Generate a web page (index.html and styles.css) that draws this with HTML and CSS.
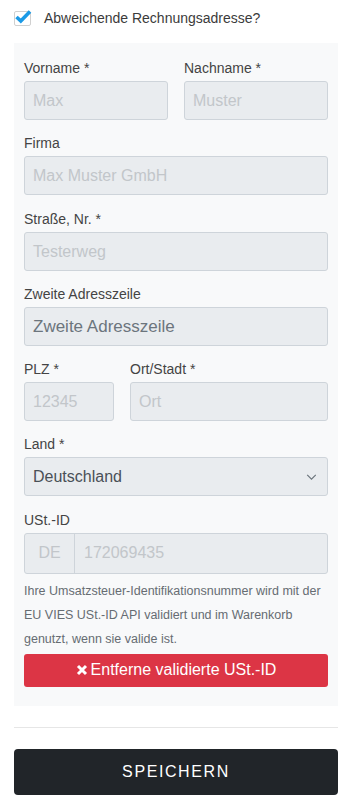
FILE: index.html
```html
<!DOCTYPE html>
<html lang="de">
<head>
<meta charset="utf-8">
<title>Rechnungsadresse</title>
<link rel="stylesheet" href="styles.css">
</head>
<body>
<div class="page">
  <label class="check">
    <span class="check-box">
      <svg viewBox="0 0 18 16" width="18" height="16"><path d="M2.5 8 L6.8 12 L16 2.5" fill="none" stroke="#1b9ae6" stroke-width="3.6" stroke-linecap="butt"/></svg>
    </span>
    <span class="check-text">Abweichende Rechnungsadresse?</span>
  </label>

  <div class="panel">
    <div class="row two">
      <div class="group">
        <label class="lbl">Vorname *</label>
        <div class="field ph">Max</div>
      </div>
      <div class="group">
        <label class="lbl">Nachname *</label>
        <div class="field ph">Muster</div>
      </div>
    </div>
    <div class="group">
      <label class="lbl">Firma</label>
      <div class="field ph">Max Muster GmbH</div>
    </div>
    <div class="group">
      <label class="lbl">Straße, Nr. *</label>
      <div class="field ph">Testerweg</div>
    </div>
    <div class="group">
      <label class="lbl">Zweite Adresszeile</label>
      <div class="field dark">Zweite Adresszeile</div>
    </div>
    <div class="row plz">
      <div class="group">
        <label class="lbl">PLZ *</label>
        <div class="field ph">12345</div>
      </div>
      <div class="group">
        <label class="lbl">Ort/Stadt *</label>
        <div class="field ph">Ort</div>
      </div>
    </div>
    <div class="group">
      <label class="lbl">Land *</label>
      <div class="field select">
        <span class="val">Deutschland</span>
        <svg class="chev" viewBox="0 0 12 7" width="11" height="6"><path d="M1 1 L6 6 L11 1" fill="none" stroke="#6c757d" stroke-width="1.4"/></svg>
      </div>
    </div>
    <div class="group ust">
      <label class="lbl">USt.-ID</label>
      <div class="igroup">
        <span class="prepend">DE</span>
        <span class="ifield">172069435</span>
      </div>
      <p class="help">Ihre Umsatzsteuer-Identifikationsnummer wird mit der EU VIES USt.-ID API validiert und im Warenkorb genutzt, wenn sie valide ist.</p>
      <button class="btn-danger" type="button"><svg class="x" viewBox="0 0 12 12" width="12" height="12"><path d="M2 2 L10 10 M10 2 L2 10" stroke="#fff" stroke-width="3" stroke-linecap="butt"/></svg> Entferne validierte USt.-ID</button>
    </div>
  </div>

  <hr class="sep">

  <button class="btn-save" type="button">SPEICHERN</button>
</div>
</body>
</html>
```
FILE: styles.css
```css
* { box-sizing: border-box; }
html, body { margin: 0; padding: 0; background: #fff; }
body {
  font-family: "Liberation Sans", Arial, sans-serif;
  color: #333;
}
.page {
  padding: 8px 13px 0 14px;
}
.check {
  display: flex;
  align-items: center;
  height: 20px;
  margin-bottom: 15px;
}
.check-box {
  position: relative;
  width: 17px;
  height: 15px;
  border: 1px solid #d0d0d0;
  border-radius: 2px;
  background: #fff;
  margin-right: 13px;
}
.check-box svg { position: absolute; left: -1px; top: -3px; display: block; }
.check-text {
  font-size: 14px;
  color: #3b3b3b;
}
.panel {
  background: #f8f9fa;
  padding: 15px 10px 19px;
}
.row { display: grid; gap: 16px; }
.row.two { grid-template-columns: 1fr 1fr; }
.row.plz { grid-template-columns: 90px 1fr; }
.group { margin-bottom: 13.3px; }
.group.ust { margin-bottom: 0; }
.lbl {
  display: block;
  font-size: 14px;
  line-height: 21px;
  margin-bottom: 2px;
  color: #444;
}
.field {
  height: 39px;
  background: #e9ecef;
  border: 1px solid #ced4da;
  border-radius: 3px;
  padding: 0 8px;
  font-size: 16px;
  line-height: 37px;
  color: #c2c6ca;
  white-space: nowrap;
  overflow: hidden;
}
.field.dark { color: #6c757d; font-size: 17px; padding-left: 8px; }
.field.select {
  display: flex;
  align-items: center;
  justify-content: space-between;
  color: #495057;
  padding-right: 10px;
}
.chev { display: block; }
.igroup {
  display: flex;
  height: 41px;
  border: 1px solid #ced4da;
  border-radius: 3px;
  background: #e9ecef;
  font-size: 16px;
  color: #c2c6ca;
}
.prepend {
  width: 50px;
  border-right: 1px solid #ced4da;
  display: flex;
  align-items: center;
  justify-content: center;
}
.ifield {
  display: flex;
  align-items: center;
  padding-left: 9px;
}
.help {
  margin: 5px 0 3px;
  font-size: 12.5px;
  line-height: 24px;
  color: #666c72;
}
.btn-danger {
  display: flex;
  align-items: center;
  justify-content: center;
  gap: 3px;
  width: 100%;
  height: 33px;
  border: none;
  border-radius: 3px;
  background: #dc3545;
  color: #fff;
  font-family: "Liberation Sans", Arial, sans-serif;
  font-size: 16px;
  padding: 0;
  cursor: pointer;
}
.btn-danger .x { display: block; }
.sep {
  border: none;
  border-top: 1px solid #e6e6e6;
  margin: 21px 0 21px;
}
.btn-save {
  display: block;
  width: 324px;
  height: 46px;
  border: none;
  border-radius: 4px;
  background: #212529;
  color: #fff;
  font-family: "Liberation Sans", Arial, sans-serif;
  font-size: 16px;
  letter-spacing: 1.6px;
  padding: 0;
}
```
